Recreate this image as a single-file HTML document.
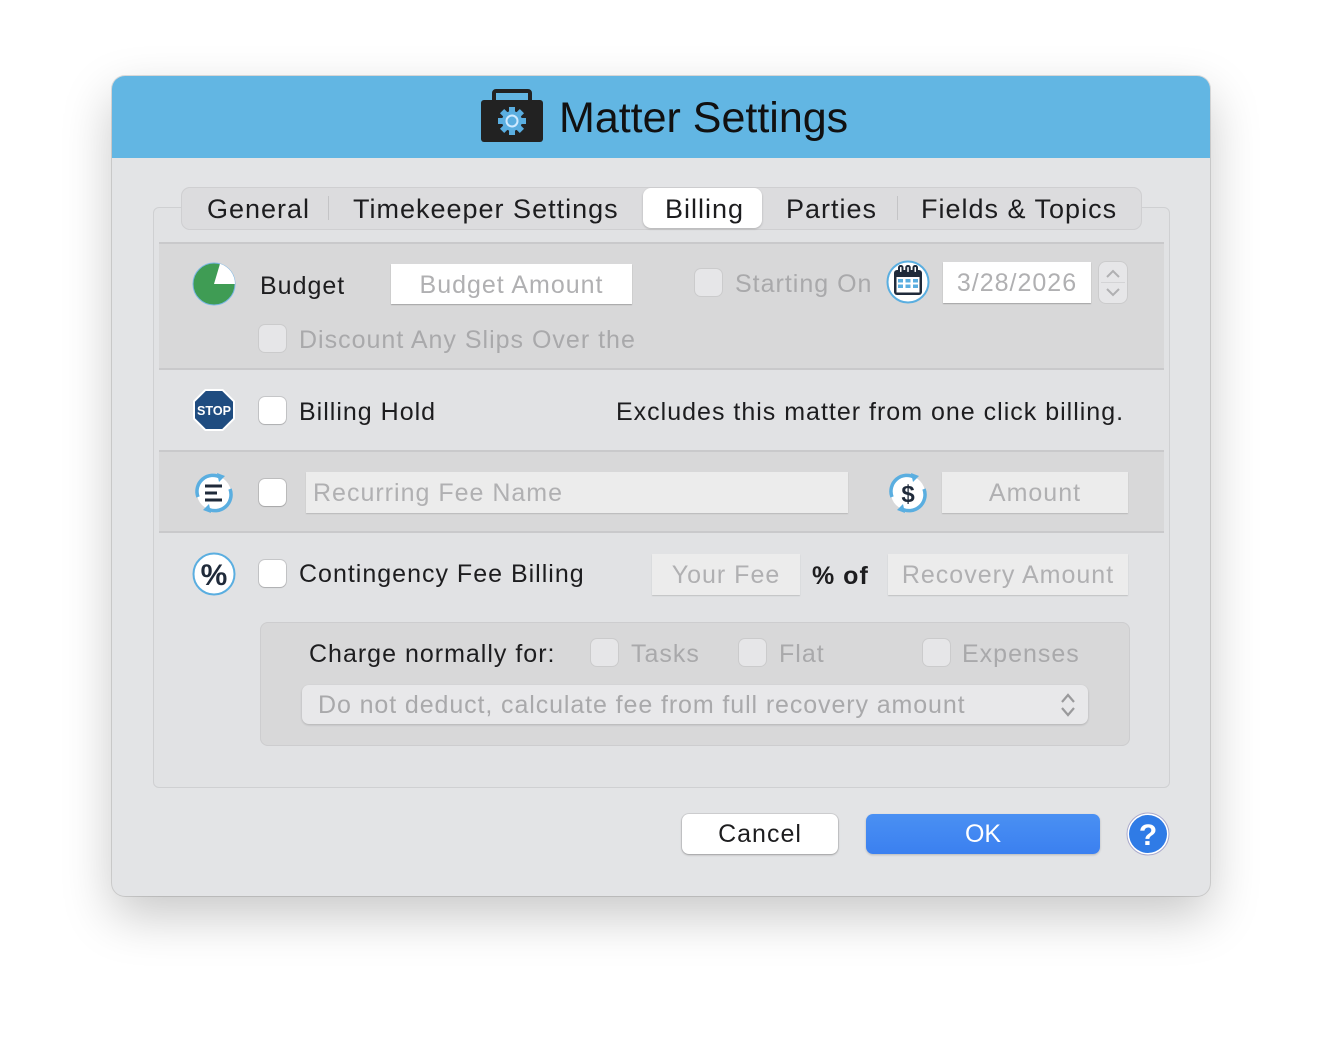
<!DOCTYPE html>
<html><head><meta charset="utf-8"><style>
*{box-sizing:border-box;margin:0;padding:0}
body{width:1322px;height:1044px;background:#fff;font-family:"Liberation Sans",sans-serif;position:relative;overflow:hidden;color:#1d1d1f}
.a{position:absolute}
.win{left:112px;top:76px;width:1098px;height:820px;border-radius:13px;background:#e3e4e6;box-shadow:0 20px 50px rgba(0,0,0,.22),0 0 0 1px rgba(0,0,0,.12);overflow:hidden}
.t{font-size:25px;white-space:nowrap;letter-spacing:1px}
.g{color:#a9a9ab}
.fld{background:#fff;box-shadow:0 1px 1px rgba(0,0,0,.25);font-size:25px;color:#b0b0b2;text-align:center;white-space:nowrap;letter-spacing:1px}
.fld2{background:#ececec;box-shadow:0 1px 1px rgba(0,0,0,.15);font-size:25px;color:#b0b0b2;white-space:nowrap;letter-spacing:1px}
.cb{width:27px;height:27px;border-radius:6px;background:#fff;box-shadow:0 0 0 1px rgba(0,0,0,.12),0 1px 1px rgba(0,0,0,.12)}
.cbd{width:27px;height:27px;border-radius:6px;background:#e6e6e8;box-shadow:0 0 0 1px rgba(0,0,0,.06)}
</style></head><body>
<div class="a win">
 <div class="a" style="left:0;top:0;width:1098px;height:82px;background:#62b6e3"></div>
</div>
<svg class="a" style="left:478px;top:88px" width="68" height="56" viewBox="0 0 68 56">
 <rect x="16" y="3" width="36" height="14" rx="2" fill="none" stroke="#222" stroke-width="4"/>
 <rect x="3" y="12" width="62" height="42" rx="3" fill="#222"/>
 <g transform="translate(34,33)" fill="#5aaee0">
  <circle r="10"/>
  <g id="t"><rect x="-3" y="-14" width="6" height="6"/></g>
  <use href="#t" transform="rotate(45)"/><use href="#t" transform="rotate(90)"/><use href="#t" transform="rotate(135)"/><use href="#t" transform="rotate(180)"/><use href="#t" transform="rotate(225)"/><use href="#t" transform="rotate(270)"/><use href="#t" transform="rotate(315)"/>
  <circle r="5.5" fill="none" stroke="#cfeaff" stroke-width="2"/>
 </g>
</svg>
<div class="a" style="left:559px;top:94px;font-size:43px;color:#111">Matter Settings</div>

<div class="a" style="left:153px;top:207px;width:1017px;height:581px;border:1px solid #cfd0d2;border-radius:6px;background:#e1e2e4"></div>
<div class="a" style="left:181px;top:187px;width:961px;height:43px;border-radius:9px;background:#dcdcde;box-shadow:inset 0 0 0 1px #cfcfd1"></div>
<div class="a" style="left:643px;top:188px;width:119px;height:40px;border-radius:8px;background:#fff;box-shadow:0 1px 2px rgba(0,0,0,.2)"></div>
<div class="a" style="left:328px;top:196px;width:1px;height:24px;background:#c4c4c6"></div>
<div class="a" style="left:897px;top:196px;width:1px;height:24px;background:#c4c4c6"></div>
<div class="a t" style="left:207px;top:194px;font-size:27px">General</div>
<div class="a t" style="left:353px;top:194px;font-size:27px">Timekeeper Settings</div>
<div class="a t" style="left:665px;top:194px;font-size:27px">Billing</div>
<div class="a t" style="left:786px;top:194px;font-size:27px">Parties</div>
<div class="a t" style="left:921px;top:194px;font-size:27px">Fields &amp; Topics</div>

<div class="a" style="left:159px;top:242px;width:1005px;height:128px;background:#d8d8d9;border-top:2px solid #c9c9cb;border-bottom:2px solid #c9c9cb"></div>
<div class="a" style="left:159px;top:450px;width:1005px;height:83px;background:#d8d8d9;border-top:2px solid #c9c9cb;border-bottom:2px solid #c9c9cb"></div>

<svg class="a" style="left:192px;top:262px" width="44" height="44" viewBox="0 0 44 44">
 <circle cx="22" cy="22" r="21" fill="#3f9c54" stroke="#7bb6e4" stroke-width="1"/>
 <path d="M22 22 L28 1.8 A21 21 0 0 1 43 22 Z" fill="#fff"/>
</svg>
<div class="a t" style="left:260px;top:272px">Budget</div>
<div class="a fld" style="left:391px;top:264px;width:241px;height:40px;line-height:42px">Budget Amount</div>
<div class="a cbd" style="left:695px;top:269px"></div>
<div class="a t g" style="left:735px;top:270px">Starting On</div>
<svg class="a" style="left:886px;top:260px" width="44" height="44" viewBox="0 0 44 44">
 <circle cx="22" cy="22" r="20.5" fill="#fff" stroke="#5aaee0" stroke-width="2"/>
 <rect x="8" y="10" width="28" height="25" rx="3" fill="#1f2a3a"/>
 <rect x="10.5" y="17" width="23" height="15.5" fill="#fff"/>
 <g fill="#5aaee0"><rect x="12" y="19" width="5" height="3.5"/><rect x="19.5" y="19" width="5" height="3.5"/><rect x="27" y="19" width="5" height="3.5"/><rect x="12" y="24.5" width="5" height="3.5"/><rect x="19.5" y="24.5" width="5" height="3.5"/><rect x="27" y="24.5" width="5" height="3.5"/></g>
 <g fill="none" stroke="#1f2a3a" stroke-width="2"><rect x="13" y="6" width="3.5" height="7" rx="1.5" fill="#fff"/><rect x="20.25" y="6" width="3.5" height="7" rx="1.5" fill="#fff"/><rect x="27.5" y="6" width="3.5" height="7" rx="1.5" fill="#fff"/></g>
</svg>
<div class="a fld" style="left:943px;top:262px;width:148px;height:41px;line-height:43px">3/28/2026</div>
<div class="a" style="left:1099px;top:262px;width:28px;height:41px;border-radius:7px;background:#e6e6e8;box-shadow:0 0 0 1px rgba(0,0,0,.06)">
 <svg width="28" height="41" viewBox="0 0 28 41"><path d="M8 15 L14 9 L20 15 M8 27 L14 33 L20 27" fill="none" stroke="#b0b0b2" stroke-width="2"/><line x1="2" y1="20.5" x2="26" y2="20.5" stroke="#d4d4d6"/></svg>
</div>
<div class="a cbd" style="left:259px;top:325px"></div>
<div class="a t g" style="left:299px;top:326px">Discount Any Slips Over the</div>

<svg class="a" style="left:192px;top:388px" width="44" height="44" viewBox="0 0 44 44">
 <polygon points="13,1 31,1 43,13 43,31 31,43 13,43 1,31 1,13" fill="#fff"/>
 <polygon points="13.8,3 30.2,3 41,13.8 41,30.2 30.2,41 13.8,41 3,30.2 3,13.8" fill="#1f4c80"/>
 <text x="22" y="27" text-anchor="middle" font-family="Liberation Sans" font-weight="bold" font-size="12.5" fill="#fff" textLength="34" lengthAdjust="spacingAndGlyphs">STOP</text>
</svg>
<div class="a cb" style="left:259px;top:397px"></div>
<div class="a t" style="left:299px;top:398px">Billing Hold</div>
<div class="a t" style="left:616px;top:398px">Excludes this matter from one click billing.</div>

<svg class="a" style="left:191px;top:470px" width="46" height="46" viewBox="0 0 46 46">
 <circle cx="23" cy="23" r="17" fill="#fff"/>
 <path d="M7 27 A16 16 0 0 1 30 7.5" fill="none" stroke="#5aaee0" stroke-width="3.5"/>
 <path d="M39 19 A16 16 0 0 1 16 38.5" fill="none" stroke="#5aaee0" stroke-width="3.5"/>
 <polygon points="26,3 34,6 28,12" fill="#5aaee0"/><polygon points="20,43 12,40 18,34" fill="#5aaee0"/>
 <g fill="#1f2a3a"><rect x="14" y="14.5" width="17" height="3"/><rect x="14" y="21.5" width="12" height="3"/><rect x="14" y="28.5" width="17" height="3"/></g>
</svg>
<div class="a cb" style="left:259px;top:479px"></div>
<div class="a fld2" style="left:306px;top:472px;width:542px;height:41px;line-height:43px;padding-left:7px">Recurring Fee Name</div>
<svg class="a" style="left:885px;top:470px" width="46" height="46" viewBox="0 0 46 46">
 <circle cx="23" cy="23" r="17" fill="#fff"/>
 <path d="M7 27 A16 16 0 0 1 30 7.5" fill="none" stroke="#5aaee0" stroke-width="3.5"/>
 <path d="M39 19 A16 16 0 0 1 16 38.5" fill="none" stroke="#5aaee0" stroke-width="3.5"/>
 <polygon points="26,3 34,6 28,12" fill="#5aaee0"/><polygon points="20,43 12,40 18,34" fill="#5aaee0"/>
 <text x="23" y="32" text-anchor="middle" font-family="Liberation Sans" font-weight="bold" font-size="24" fill="#1f2a3a">$</text>
</svg>
<div class="a fld2" style="left:942px;top:472px;width:186px;height:41px;line-height:43px;text-align:center">Amount</div>

<svg class="a" style="left:192px;top:552px" width="44" height="44" viewBox="0 0 44 44">
 <circle cx="22" cy="22" r="20.5" fill="#fff" stroke="#5aaee0" stroke-width="2"/>
 <text x="22" y="33" text-anchor="middle" font-family="Liberation Sans" font-weight="bold" font-size="30" fill="#1f2a3a">%</text>
</svg>
<div class="a cb" style="left:259px;top:560px"></div>
<div class="a t" style="left:299px;top:560px">Contingency Fee Billing</div>
<div class="a fld2" style="left:652px;top:554px;width:148px;height:41px;line-height:43px;text-align:center">Your Fee</div>
<div class="a t" style="left:812px;top:562px;font-weight:bold">% of</div>
<div class="a fld2" style="left:888px;top:554px;width:240px;height:41px;line-height:43px;text-align:center">Recovery Amount</div>

<div class="a" style="left:260px;top:622px;width:870px;height:124px;border-radius:8px;background:#d8d8d9;box-shadow:inset 0 0 0 1px #cdcdcf"></div>
<div class="a t" style="left:309px;top:640px">Charge normally for:</div>
<div class="a cbd" style="left:591px;top:639px"></div>
<div class="a t g" style="left:631px;top:640px">Tasks</div>
<div class="a cbd" style="left:739px;top:639px"></div>
<div class="a t g" style="left:779px;top:640px">Flat</div>
<div class="a cbd" style="left:923px;top:639px"></div>
<div class="a t g" style="left:962px;top:640px">Expenses</div>
<div class="a" style="left:302px;top:685px;width:786px;height:39px;border-radius:7px;background:#e8e8ea;box-shadow:0 1px 2px rgba(0,0,0,.18)"></div>
<div class="a t g" style="left:318px;top:691px;letter-spacing:0.9px">Do not deduct, calculate fee from full recovery amount</div>
<svg class="a" style="left:1058px;top:692px" width="20" height="26" viewBox="0 0 20 26"><path d="M4 10 L10 3 L16 10 M4 16 L10 23 L16 16" fill="none" stroke="#9a9a9c" stroke-width="2.2"/></svg>

<div class="a" style="left:682px;top:814px;width:156px;height:40px;border-radius:7px;background:#fff;box-shadow:0 0 0 1px rgba(0,0,0,.08),0 1px 2px rgba(0,0,0,.25);text-align:center;line-height:40px;font-size:25px;letter-spacing:1px">Cancel</div>
<div class="a" style="left:866px;top:814px;width:234px;height:40px;border-radius:7px;background:linear-gradient(#4a90f3,#3b80f0);box-shadow:0 1px 2px rgba(0,0,0,.2);text-align:center;line-height:40px;font-size:25px;color:#fff">OK</div>
<svg class="a" style="left:1126px;top:812px" width="44" height="44" viewBox="0 0 44 44">
 <circle cx="22" cy="22" r="21" fill="#fff" stroke="#aac" stroke-width="1"/>
 <circle cx="22" cy="22" r="19" fill="#2f7be6"/>
 <text x="22" y="33" text-anchor="middle" font-family="Liberation Sans" font-weight="bold" font-size="30" fill="#fff">?</text>
</svg>
</body></html>
